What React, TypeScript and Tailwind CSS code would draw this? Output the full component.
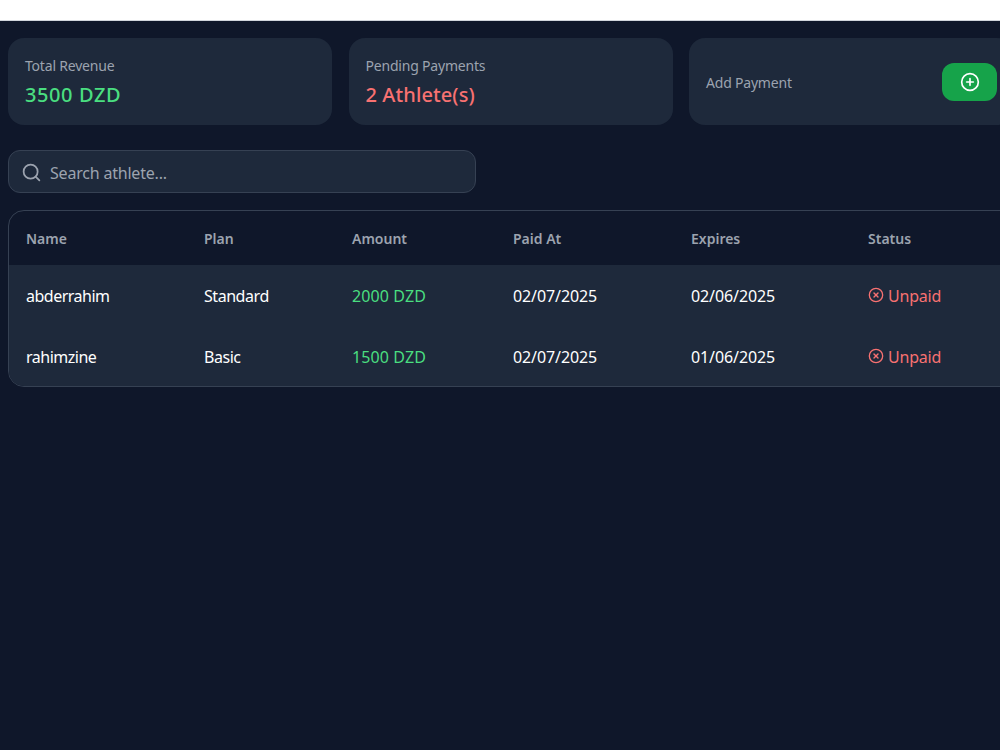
import { CirclePlus, CircleX, Search } from "lucide-react"

const payments = [
  { name: "abderrahim", plan: "Standard", amount: "2000 DZD", paidAt: "02/07/2025", expires: "02/06/2025" },
  { name: "rahimzine", plan: "Basic", amount: "1500 DZD", paidAt: "02/07/2025", expires: "01/06/2025" },
]

const columns = ["w-[178px]", "w-[148px]", "w-[161px]", "w-[178px]", "w-[177px]", "w-[150px]"]

export default function App() {
  return (
    <div className="h-[750px] w-[1000px] overflow-hidden bg-[#0f172a] font-['Noto_Sans',sans-serif]">
      <div className="h-[21px] border-b border-gray-300 bg-white"></div>

      <div className="w-[1030px] px-2 pt-[17px]">
        <div className="flex gap-[16.5px]">
          <div className="h-[87px] w-[324px] rounded-2xl bg-[#1e293b] px-[17px] pt-[17px]">
            <p className="text-sm leading-[22px] tracking-[-0.2px] text-[#9ca3af]">Total Revenue</p>
            <p className="mt-1 text-xl leading-7 font-medium tracking-[0.6px] text-[#4ade80]">3500 DZD</p>
          </div>
          <div className="h-[87px] w-[324px] rounded-2xl bg-[#1e293b] px-[17px] pt-[17px]">
            <p className="text-sm leading-[22px] tracking-[-0.2px] text-[#9ca3af]">Pending Payments</p>
            <p className="mt-1 text-xl leading-7 font-medium tracking-[0.1px] text-[#f87171]">2 Athlete(s)</p>
          </div>
          <div className="flex h-[87px] w-[324px] items-center justify-between rounded-2xl bg-[#1e293b] pl-[17px] pr-[16px]">
            <p className="pt-0.5 text-sm tracking-[-0.2px] text-[#9ca3af]">Add Payment</p>
            <button className="flex h-[38px] w-[55px] items-center justify-center rounded-xl bg-[#16a34a] text-white">
              <CirclePlus size={20} />
            </button>
          </div>
        </div>

        <div className="mt-[25px] flex h-[43px] w-[468px] items-center gap-2 rounded-xl border border-gray-700 bg-[#1e293b] pl-3">
          <Search size={21} className="mt-px text-[#9ca3af]" />
          <span className="pt-0.5 text-base tracking-[-0.2px] text-[#9ca3af]">Search athlete...</span>
        </div>

        <div className="mt-[17px] w-[1014px] overflow-hidden rounded-2xl border border-gray-700">
          <div className="flex h-[54px] items-center pl-[17px] pt-0.5 text-sm font-semibold text-[#9ca3af]">
            {["Name", "Plan", "Amount", "Paid At", "Expires", "Status"].map((label, i) => (
              <div key={label} className={columns[i]}>{label}</div>
            ))}
          </div>
          {payments.map((p) => (
            <div key={p.name} className="flex h-[60.5px] items-center bg-[#1e293b] pl-[17px] pt-0.5 text-base text-white">
              <div className={`${columns[0]} tracking-[-0.5px]`}>{p.name}</div>
              <div className={`${columns[1]} tracking-[-0.45px]`}>{p.plan}</div>
              <div className={`${columns[2]} tracking-[0.1px] text-[#4ade80]`}>{p.amount}</div>
              <div className={`${columns[3]} tracking-[-0.1px]`}>{p.paidAt}</div>
              <div className={`${columns[4]} tracking-[-0.1px]`}>{p.expires}</div>
              <div className={`${columns[5]} flex items-center gap-1 tracking-[-0.2px] text-[#f87171]`}>
                <CircleX size={16} className="-mt-0.5" />
                Unpaid
              </div>
            </div>
          ))}
        </div>
      </div>
    </div>
  )
}
